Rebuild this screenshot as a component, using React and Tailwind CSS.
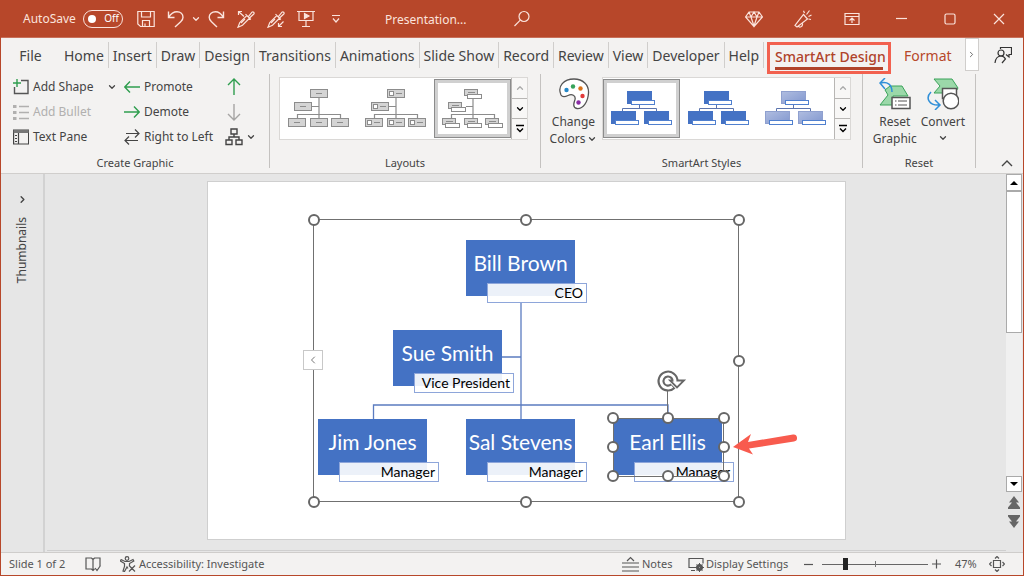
import { ChevronDown, ChevronLeft, ChevronRight, ChevronUp } from "lucide-react";

const tabs = [
  "Home",
  "Insert",
  "Draw",
  "Design",
  "Transitions",
  "Animations",
  "Slide Show",
  "Record",
  "Review",
  "View",
  "Developer",
  "Help",
];

// positions inside the slide
const people = [
  { name: "Bill Brown", title: "CEO", x: 259, y: 59 },
  { name: "Sue Smith", title: "Vice President", x: 186, y: 149 },
  { name: "Jim Jones", title: "Manager", x: 111, y: 238 },
  { name: "Sal Stevens", title: "Manager", x: 259, y: 238 },
  { name: "Earl Ellis", title: "Manager", x: 406, y: 238 },
];

const frameHandles = [
  [107, 39],
  [319, 39],
  [532, 39],
  [532, 180],
  [532, 321],
  [319, 321],
  [107, 321],
];

const shapeHandles = [
  [406, 237],
  [461, 237],
  [517, 237],
  [406, 266],
  [517, 266],
  [406, 295],
  [461, 295],
  [517, 295],
];

const Icon = ({ size = 18, stroke = "currentColor", children }) => (
  <svg
    width={size}
    height={size}
    viewBox={`0 0 ${size} ${size}`}
    fill="none"
    stroke={stroke}
    strokeWidth="1.2"
    className="shrink-0"
    aria-hidden="true"
  >
    {children}
  </svg>
);

const TitleButton = ({ label, width = "w-[30px]", children }) => (
  <button aria-label={label} className={`${width} h-full flex items-center justify-center`}>
    {children}
  </button>
);

const TitleBar = () => (
  <header className="h-[38px] shrink-0 bg-[#b7472a] text-[#fbe3dc] flex items-center text-[12px] border-b border-[#c8705a]">
    <label className="relative flex items-center gap-[7px] pl-[22px] w-[130px]">
      AutoSave
      <input
        type="checkbox"
        role="switch"
        className="appearance-none w-[40px] h-[18px] rounded-full border border-[#fbe3dc] before:content-[''] before:block before:w-[8px] before:h-[8px] before:rounded-full before:bg-white before:mt-[4px] before:ml-[4px]"
      />
      <span className="absolute right-[12px] text-[10px] text-white">Off</span>
    </label>
    <TitleButton label="Save">
      <Icon>
        <path d="M.8 1.500h16.400v15H3.500L.8 14zM4.500 1.500v5.500h9V1.500M5.500 16.500v-6h7v6M8 16v-2.500" />
      </Icon>
    </TitleButton>
    <TitleButton label="Undo">
      <Icon>
        <path d="M1.500 1.500v6h6M1.800 7.200C4 3.500 7 1.800 10 1.800c3.500 0 6 2.300 6 5.400 0 2-.8 3.200-2.300 4.600L8 17" strokeWidth="1.400" />
      </Icon>
    </TitleButton>
    <TitleButton label="Undo list" width="w-[10px]">
      <ChevronDown size={10} strokeWidth={3} className="shrink-0" />
    </TitleButton>
    <TitleButton label="Redo">
      <Icon>
        <path d="M16.500 1.500v6h-6M16.200 7.200C14 3.500 11.500 1.800 8.500 1.800 5 1.800 2.200 4.100 2.200 7.200c0 2 .8 3.200 2.300 4.600L10 17" strokeWidth="1.400" />
      </Icon>
    </TitleButton>
    <TitleButton label="Sample style">
      <Icon>
        <path d="M1 17.200l1.800-4.700 7-7 2.700 2.700-7 7zM8.500 4.200l5.300 5.300M11.200 6.800L15 2.200c1-1 2.800.6 1.800 1.800L12.500 8" />
        <path d="M1.500 5V1.500H5M1.500 1.500L7 6.500M4 13l4-4" />
      </Icon>
    </TitleButton>
    <TitleButton label="Apply style">
      <Icon>
        <path d="M1 17.200l1.800-4.700 7-7 2.700 2.700-7 7zM8.500 4.200l5.300 5.300M11.200 6.800L15 2.200c1-1 2.800.6 1.800 1.800L12.500 8" />
        <path d="M16.500 11.500l-5 5M11.500 13v3.500H15M4 13l4-4" />
      </Icon>
    </TitleButton>
    <TitleButton label="From beginning">
      <Icon>
        <path d="M0 1.500h18M2 1.500v9h14v-9M9 10.500v6M5 16.500h8" />
        <path d="M7.500 3.500v5L12 6z" fill="currentColor" />
      </Icon>
    </TitleButton>
    <TitleButton label="Customize">
      <Icon size={10}>
        <path d="M1 1.500h8M2 4.500L5 8l3-3.500" />
      </Icon>
    </TitleButton>
    <span className="ml-[34px] w-[122px] pt-[2px]">Presentation...</span>
    <TitleButton label="Search">
      <Icon>
        <circle cx="11" cy="6.500" r="5" />
        <path d="M7.300 10.200L1.500 16" />
      </Icon>
    </TitleButton>
    <div className="ml-auto flex h-full">
      <TitleButton label="Premium" width="w-[49px]">
        <Icon>
          <path d="M4 2h10l3.500 5L9 16.500.5 7zM.5 7h17M4 2l2 5 3 9 3-9 2-5M6 7l3-5 3 5" />
        </Icon>
      </TitleButton>
      <TitleButton label="What's new" width="w-[49px]">
        <Icon>
          <path d="M9.500 4.500l4 4.500L3 17l-2-1.500zM4 16c1.500 2 5 1 4.500-2.500M10.500 3L9.500.8M12.500 4.500l3-4M14.500 6.500l3-1.500M14.500 9l2.500.5" />
        </Icon>
      </TitleButton>
      <TitleButton label="Ribbon display" width="w-[49px]">
        <Icon size={16}>
          <path d="M1 2.500h14v11H1zM1 5.500h14M8 12V7M5.500 9.500L8 7l2.500 2.500" />
        </Icon>
      </TitleButton>
      <TitleButton label="Minimize" width="w-[49px]">
        <Icon size={12}>
          <path d="M1 5.500h11" />
        </Icon>
      </TitleButton>
      <TitleButton label="Maximize" width="w-[49px]">
        <Icon size={12}>
          <rect x="1" y="1" width="10" height="10" rx="1.500" />
        </Icon>
      </TitleButton>
      <TitleButton label="Close" width="w-[49px]">
        <Icon size={12}>
          <path d="M1 1l10 10M11 1L1 11" />
        </Icon>
      </TitleButton>
    </div>
  </header>
);

const TabBar = () => (
  <nav className="h-[36px] shrink-0 flex items-start pt-1 text-[14px] text-[#444] whitespace-nowrap">
    <button className="h-[26px] w-[59px] shrink-0">File</button>
    {tabs.map((tab) => (
      <button key={tab} className="h-[26px] shrink-0 px-1 border-r border-[#d0cecc]">
        {tab}
      </button>
    ))}
    <button className="ml-[3px] h-[32px] w-[124px] shrink-0 border-3 border-[#f2614f] text-[#b0432a] font-medium">
      <span className="block mx-auto w-[108px] border-b-3 border-[#b0432a] leading-[20px]">
        SmartArt Design
      </span>
    </button>
    <button className="h-[26px] px-[13px] text-[#b7472a]">Format</button>
    <button
      aria-label="More tabs"
      className="ml-auto -mt-1 w-[14px] h-[33px] shrink-0 bg-white border border-[#d0cecc] flex items-center justify-center"
    >
      <ChevronRight size={9} className="shrink-0" />
    </button>
    <button aria-label="Comments" className="w-[48px] h-[26px] shrink-0 flex items-center justify-center">
      <Icon stroke="#333">
        <path d="M6.500 3V1.500h11v7h-2.500V11L12 8.500" />
        <circle cx="7" cy="7" r="3" />
        <path d="M1 17c.5-4.500 3-7 6-7 2 0 3.500 1.200 4.500 3L8 17" />
      </Icon>
    </button>
  </nav>
);

const Group = ({ label, width, children }) => (
  <section className={`${width} shrink-0 flex flex-col border-r border-[#c4c2c0]`}>
    <div className="flex-1 flex">{children}</div>
    <h2 className="text-[11px] leading-[10px] text-center">{label}</h2>
  </section>
);

const RibbonButton = ({ icon, disabled, children }) => (
  <button
    disabled={disabled}
    className="flex items-center gap-1 h-[25px] whitespace-nowrap disabled:text-[#b1b0af]"
  >
    {icon}
    {children}
  </button>
);

const BulletIcon = () => (
  <Icon size={16} stroke="#b1b0af">
    <path d="M6 2.500h10M6 8.500h10M6 14.500h10" strokeWidth="1.400" />
    <path d="M0 2.500h3.500M0 8.500h3.500M0 14.500h3.500" strokeWidth="3" />
  </Icon>
);

const CreateGraphic = () => (
  <div className="flex pl-3 text-[12px]">
    <div className="w-[86px] flex flex-col items-start">
      <RibbonButton
        icon={
          <Icon size={16}>
            <path d="M8 1.500h7v13H1.500V8" stroke="#555" strokeWidth="1.400" />
            <path d="M4 0v8M0 4h8" stroke="#2f9e4f" strokeWidth="1.400" />
          </Icon>
        }
      >
        Add Shape
      </RibbonButton>
      <RibbonButton disabled icon={<BulletIcon />}>
        Add Bullet
      </RibbonButton>
      <RibbonButton
        icon={
          <Icon size={16} stroke="#444">
            <path d="M.6 1h15v14H.6zM5.500 3.500V15M2 6.500h2M2 9.500h2M2 12.500h2" />
            <path d="M.6 2.500h15" strokeWidth="3" stroke="#777" />
          </Icon>
        }
      >
        Text Pane
      </RibbonButton>
    </div>
    <button
      aria-label="Add shape options"
      className="h-[25px] w-[25px] flex items-center justify-center"
    >
      <ChevronDown size={10} strokeWidth={3} />
    </button>
    <div className="w-[101px] flex flex-col items-start">
      <RibbonButton
        icon={
          <Icon size={16} stroke="#2f9e4f">
            <path d="M16 8H1M6 2.500L.8 8 6 13.500" strokeWidth="1.400" />
          </Icon>
        }
      >
        Promote
      </RibbonButton>
      <RibbonButton
        icon={
          <Icon size={16} stroke="#2f9e4f">
            <path d="M0 8h15M10 2.500L15.200 8 10 13.500" strokeWidth="1.400" />
          </Icon>
        }
      >
        Demote
      </RibbonButton>
      <RibbonButton
        icon={
          <Icon size={16} stroke="#444">
            <path d="M2 4.500h13M11 .5l4 4-4 4M14 11.500H1M5 7.500l-4 4 4 4" />
          </Icon>
        }
      >
        Right to Left
      </RibbonButton>
    </div>
    <div className="flex flex-col items-start">
      <button aria-label="Move up" className="h-[25px]">
        <Icon size={18} stroke="#2f9e4f">
          <path d="M9 17V1M3 7l6-6 6 6" strokeWidth="1.400" />
        </Icon>
      </button>
      <button aria-label="Move down" className="h-[25px]">
        <Icon size={18} stroke="#a6a5a4">
          <path d="M9 1v16M3 11l6 6 6-6" strokeWidth="1.400" />
        </Icon>
      </button>
      <button aria-label="Layout" className="h-[25px] flex items-center gap-[3px]">
        <Icon size={18} stroke="#444">
          <path d="M6 1h6v5H6zM1 12h6v4.500H1zM11 12h6v4.500h-6zM9 6v3M4 12V9h10v3" strokeWidth="1.400" />
        </Icon>
        <ChevronDown size={10} strokeWidth={3} />
      </button>
    </div>
  </div>
);

const LayoutThumb = ({ kind }) => {
  const boxes = [
    [22, 0],
    [6, 13],
    [0, 29],
    [22, 29],
    [43, 29],
  ];
  return (
    <svg width="62" height="39" viewBox="0 0 62 39" fill="none" stroke="#8c8c8c" aria-hidden="true">
      <path d="M31 9v20M24 17.500h7M9.500 29v-3.500h43V29" strokeWidth="1.200" />
      {boxes.map(([x, y]) =>
        kind === "titled" ? (
          <g key={`${x}-${y}`}>
            <rect x={x + 0.5} y={y + 0.5} width="13" height="6" fill="#d4d4d4" />
            <path d={`M${x + 4} ${y + 3.5}h7`} />
            <rect x={x + 3.5} y={y + 5.5} width="14" height="4" fill="#fff" />
          </g>
        ) : (
          <g key={`${x}-${y}`}>
            <rect x={x + 0.5} y={y + 0.5} width="17" height="8" fill="#d4d4d4" />
            {kind === "picture" ? (
              <>
                <rect x={x + 2.5} y={y + 2.5} width="4" height="4" fill="#fff" />
                <path d={`M${x + 9} ${y + 4.5}h6`} />
              </>
            ) : (
              <path d={`M${x + 6} ${y + 4.5}h6`} />
            )}
          </g>
        )
      )}
    </svg>
  );
};

const StyleThumb = ({ soft }) => {
  const fill = soft ? "url(#softBlue)" : "#4472c4";
  const edge = soft ? "#8fa0cf" : "#4472c4";
  return (
    <svg width="62" height="35" viewBox="0 0 62 35" fill="none" aria-hidden="true">
      <defs>
        <linearGradient id="softBlue" x1="0" y1="0" x2="1" y2="1">
          <stop offset="0" stopColor="#b0bde0" />
          <stop offset="1" stopColor="#8197cf" />
        </linearGradient>
      </defs>
      <path d="M28.500 14v3.500M11.500 20v-2.500h34V20" stroke="#5b74ae" />
      {[
        [16, 0],
        [0, 20],
        [33, 20],
      ].map(([x, y]) => (
        <g key={x}>
          <rect x={x + 0.5} y={y + 0.5} width="24" height="12" fill={fill} stroke={edge} />
          <rect x={x + 4.5} y={y + 9.5} width="23" height="4" fill="#fff" stroke="#5080cf" />
        </g>
      ))}
    </svg>
  );
};

const Gallery = ({ selected, items }) => (
  <div className="self-start mt-[3px] h-[63px] flex bg-white border border-[#dad8d6]">
    {items.map((item, i) => (
      <button
        key={i}
        aria-label={`Option ${i + 1}`}
        className={`w-[77px] h-[59px] self-center flex items-center justify-center ${
          i === selected ? "border border-[#8c8c8c] ring-3 ring-inset ring-[#d0d0d0]" : ""
        }`}
      >
        {item}
      </button>
    ))}
    <div className="w-[16px] flex flex-col border-l border-[#b8b6b4] divide-y divide-[#b8b6b4] bg-[#f8f7f6]">
      <button aria-label="Scroll up" className="flex-1 flex items-center justify-center text-[#aaa]">
        <ChevronUp size={10} strokeWidth={3} />
      </button>
      <button aria-label="Scroll down" className="flex-1 flex items-center justify-center text-black">
        <ChevronDown size={10} strokeWidth={3} />
      </button>
      <button aria-label="More" className="flex-1 flex items-center justify-center text-black">
        <Icon size={10}>
          <path d="M1 1.500h8M2 4.500l3 3 3-3" strokeWidth="1.400" />
        </Icon>
      </button>
    </div>
  </div>
);

const BigButton = ({ icon, children }) => (
  <button className="flex flex-col items-center justify-start pt-1 text-[12px] leading-[17px] h-[75px]">
    <svg width="32" height="32" viewBox="0 0 32 32" fill="none" className="mb-[3px]" aria-hidden="true">
      {icon}
    </svg>
    {children}
  </button>
);

const Ribbon = () => (
  <div className="h-[100px] shrink-0 flex text-[#444] pb-[5px] border-b border-[#d0cecc]">
    <Group label="Create Graphic" width="w-[269px]">
      <CreateGraphic />
    </Group>
    <Group label="Layouts" width="w-[271px]">
      <div className="flex pl-[9px]">
        <Gallery
          selected={2}
          items={[
            <LayoutThumb kind="plain" />,
            <LayoutThumb kind="picture" />,
            <LayoutThumb kind="titled" />,
          ]}
        />
      </div>
    </Group>
    <Group label="SmartArt Styles" width="w-[322px]">
      <div className="w-[61px] flex justify-center pl-1">
        <BigButton
          icon={
            <>
              <path
                d="M3 17C-1 8 6 1 16 1c9 0 15 6 14.500 14C30 24 25 31 19 30.500c-5-.5-3-6-2-9 1-4-3-6-7-4-3 1.500-5.500 2-7-.5z"
                fill="#fff"
                stroke="#555"
                strokeWidth="1.300"
              />
              <circle cx="8.500" cy="12" r="2.200" fill="#2488c8" />
              <circle cx="15" cy="8.500" r="2.200" fill="#36a35a" />
              <circle cx="22.500" cy="10.500" r="2.200" fill="#d9731a" />
              <circle cx="24.500" cy="18" r="2.200" fill="#e23b3b" />
              <circle cx="20.500" cy="24.500" r="2.200" fill="#8a2da5" />
            </>
          }
        >
          <span>Change</span>
          <span className="flex items-center gap-[2px]">
            Colors <ChevronDown size={10} strokeWidth={3} />
          </span>
        </BigButton>
      </div>
      <Gallery
        selected={0}
        items={[<StyleThumb />, <StyleThumb />, <StyleThumb soft />]}
      />
    </Group>
    <Group label="Reset" width="w-[113px]">
      <div className="flex-1 flex justify-center gap-1">
        <BigButton
          icon={
            <>
              <path d="M11 8h12l6 10H14v9H1l8-10-3-5z" fill="#9bd8a9" stroke="#3aa35a" />
              <path d="M6 0L1 5l5 6M1 5c8-2 12 2 12 9" stroke="#2f8fd8" strokeWidth="1.500" />
              <path d="M13 19.500h18v11H13z" fill="#fff" stroke="#555" strokeWidth="1.500" />
              <path d="M16 23h1.500M19 23h9M16 27h1.500M19 27h9" stroke="#555" />
            </>
          }
        >
          <span>Reset</span>
          <span>Graphic</span>
        </BigButton>
        <BigButton
          icon={
            <>
              <path d="M7 1h18l6 9-3 5H7l6-7z" fill="#9bd8a9" stroke="#3aa35a" />
              <path d="M15.500 10.500h14v10h-14z" fill="#fff" stroke="#555" strokeWidth="1.500" />
              <circle cx="24" cy="23" r="7.800" fill="#fff" stroke="#555" strokeWidth="1.500" />
              <path d="M4 14c-6 6-2 14 9 13M8 22l5 5-5 5" stroke="#2f8fd8" strokeWidth="1.500" />
            </>
          }
        >
          <span>Convert</span>
          <ChevronDown size={10} strokeWidth={3} className="mt-[3px]" />
        </BigButton>
      </div>
    </Group>
    <button aria-label="Collapse ribbon" className="ml-auto self-end w-[32px] flex justify-center">
      <Icon size={12}>
        <path d="M1 10l5-5 5 5" strokeWidth="1.400" />
      </Icon>
    </button>
  </div>
);

const Person = ({ name, title, x, y }) => (
  <div className="absolute" style={{ left: x, top: y }}>
    <div className="w-[109px] h-[56px] bg-[#4472c4] text-white text-[21px] leading-[46px] text-center whitespace-nowrap">
      {name}
    </div>
    <div className="absolute left-[21px] top-[43px] w-[100px] h-[20px] bg-white/90 border border-[#8ea6da] text-black text-[14px] leading-[17px] text-right pr-[3px] whitespace-nowrap">
      {title}
    </div>
  </div>
);

const Handle = ({ at }) => (
  <circle cx={at[0]} cy={at[1]} r="5" fill="#fff" stroke="#666" strokeWidth="2" />
);

const RotateHandle = () => (
  <g>
    <circle cx="461" cy="200" r="10" fill="#fff" stroke="none" />
    <path d="M466 205a7 7 0 1 1 2-5" stroke="#666" strokeWidth="7" />
    <path d="M463 199.500h14l-7 7z" fill="#fff" stroke="#666" strokeWidth="1.800" />
    <path d="M465.300 205.600a7 7 0 1 1 2.700-4.600" stroke="#fff" strokeWidth="2.800" />
  </g>
);

const Slide = () => (
  <div className="relative w-[639px] h-[359px] bg-white outline outline-[#cfcfcf] -outline-offset-1 font-['Lato','Liberation_Sans',sans-serif]">
    <svg className="absolute inset-0" width="639" height="359" fill="none" stroke="#5b7cc0" strokeWidth="1.300">
      <path d="M314 122v116M295 176h19M166.500 238v-14h294.500v14" />
    </svg>
    {people.map((person) => (
      <Person key={person.name} {...person} />
    ))}
    {/* selection frames */}
    <svg className="absolute inset-0" width="639" height="359" fill="none" stroke="#707070">
      <rect x="106.500" y="38.500" width="425" height="282" />
      <rect x="406.500" y="237.500" width="110" height="58" />
      <path d="M460.500 209v28" />
      {[...frameHandles, ...shapeHandles].map((at) => (
        <Handle key={at.join()} at={at} />
      ))}
      <RotateHandle />
      <path d="M526 266l18-13-3 8 45-7.500a3.500 3.500 0 0 1 1 7l-45 7 4 6z" fill="#f85b4e" stroke="none" />
    </svg>
    <button
      aria-label="Open text pane"
      className="absolute left-[96px] top-[169px] w-[20px] h-[20px] bg-white border border-[#c8c8c8] text-[#777] flex items-center justify-center"
    >
      <ChevronLeft size={12} />
    </button>
  </div>
);

const ScrollBar = () => (
  <div className="w-[16px] mr-px shrink-0 flex flex-col items-center bg-[#f0f0f0]">
    <button aria-label="Scroll up" className="w-full h-[17px] bg-white border border-[#aaa] flex items-center justify-center">
      <svg width="8" height="4"><path d="M0 4l4-4 4 4z" /></svg>
    </button>
    <div className="w-full h-[142px] bg-white border border-[#aaa]" />
    <button aria-label="Scroll down" className="mt-auto w-full h-[16px] bg-white border border-[#aaa] flex items-center justify-center">
      <svg width="8" height="4"><path d="M0 0l4 4 4-4z" /></svg>
    </button>
    <div className="w-full h-[60px] pt-1 bg-[#e6e6e6] flex flex-col items-center gap-1">
      <button aria-label="Previous slide">
        <svg width="12" height="14" fill="#666"><path d="M6 0l5 6.500H1zM6 4l6 7.500V13H0v-1.500z" /></svg>
      </button>
      <button aria-label="Next slide">
        <svg width="12" height="14" fill="#666"><path d="M6 14l5-6.500H1zM6 10l6-7.500V1H0v1.500z" /></svg>
      </button>
    </div>
  </div>
);

const Workspace = () => (
  <main className="flex-1 flex bg-[#e6e6e6] text-[#444]">
    <aside className="w-[44px] shrink-0 border-r-2 border-[#d2d2d2] flex flex-col items-center pt-[20px]">
      <button aria-label="Show thumbnails">
        <ChevronRight size={11} strokeWidth={3} />
      </button>
      <span className="mt-3 text-[12px] leading-[16px] [writing-mode:vertical-rl] rotate-180">
        Thumbnails
      </span>
    </aside>
    <div className="flex-1 flex flex-col items-center justify-between pl-[2px] pt-[7px]">
      <Slide />
      <div className="w-full h-px mb-px bg-[#cfcfcf]" />
    </div>
    <ScrollBar />
  </main>
);

const StatusBar = () => (
  <footer className="h-[23px] shrink-0 flex items-center text-[11px] text-[#555] border-t border-[#cfcdcb] bg-[#f3f2f1] whitespace-nowrap">
    <span className="pl-2 w-[84px]">Slide 1 of 2</span>
    <button aria-label="Spelling" className="w-[35px]">
      <Icon size={16}>
        <path d="M8 3.500L6.500 2H1v11h5.500L8 14.500l1.500-1.500M8 3.500L9.500 2H15v8M8 3.500v11M10 12l2 2.500 3.500-5" />
      </Icon>
    </button>
    <button className="flex items-center gap-[3px]">
      <Icon size={16}>
        <circle cx="7" cy="2.500" r="1.800" />
        <path d="M1 3.500l4 2h4l4-2 .8 1.500L9.500 7.500v2M1 3.500L.5 5l4 2.500v3L3 15l1.500.500L7 11l1 1.500M9 9.500l6 6M15 9.500l-6 6" />
      </Icon>
      Accessibility: Investigate
    </button>
    <button className="ml-auto flex items-center gap-[3px] w-[66px]">
      <Icon size={17}>
        <path d="M0 7h17M0 11h17M0 15h17M5 5l3.500-3.500L12 5" />
      </Icon>
      Notes
    </button>
    <button className="flex items-center gap-[2px] w-[116px]">
      <Icon size={16}>
        <path d="M8 11.500H1v-9h14v5M3 14.500h4" />
        <circle cx="11.500" cy="11.500" r="2.500" strokeWidth="2" />
        <path d="M11.500 7v9M7 11.500h9M8.500 8.500l6 6M14.500 8.500l-6 6" strokeWidth="1" />
        <circle cx="11.500" cy="11.500" r="1" fill="#fff" />
      </Icon>
      Display Settings
    </button>
    <button aria-label="Zoom out" className="w-[18px]">
      <Icon size={10}>
        <path d="M0 5.500h9" />
      </Icon>
    </button>
    <div className="relative w-[106px] h-[12px] flex items-center">
      <input
        type="range"
        aria-label="Zoom"
        defaultValue={21}
        className="appearance-none w-full h-px bg-[#666] [&::-webkit-slider-thumb]:appearance-none [&::-webkit-slider-thumb]:w-[5px] [&::-webkit-slider-thumb]:h-[12px] [&::-webkit-slider-thumb]:bg-[#222]"
      />
      <span className="absolute left-1/2 top-[3px] w-px h-[6px] bg-[#777]" />
    </div>
    <button aria-label="Zoom in" className="w-[27px] pl-1">
      <Icon size={10}>
        <path d="M0 5h9M4.500.5v9" />
      </Icon>
    </button>
    <span className="w-[34px]">47%</span>
    <button aria-label="Fit to window" className="w-[34px]">
      <Icon size={16}>
        <path d="M4.500 4.500h7v7h-7zM6 2.500l2-2 2 2M6 13.500l2 2 2-2M2.500 6l-2 2 2 2M13.500 6l2 2-2 2" />
      </Icon>
    </button>
  </footer>
);

const App = () => (
  <div className="min-h-screen flex flex-col bg-[#f3f2f1] border-x border-b border-[#b7472a] font-['Noto_Sans','Liberation_Sans',sans-serif]">
    <TitleBar />
    <TabBar />
    <Ribbon />
    <Workspace />
    <StatusBar />
  </div>
);

export default App;
